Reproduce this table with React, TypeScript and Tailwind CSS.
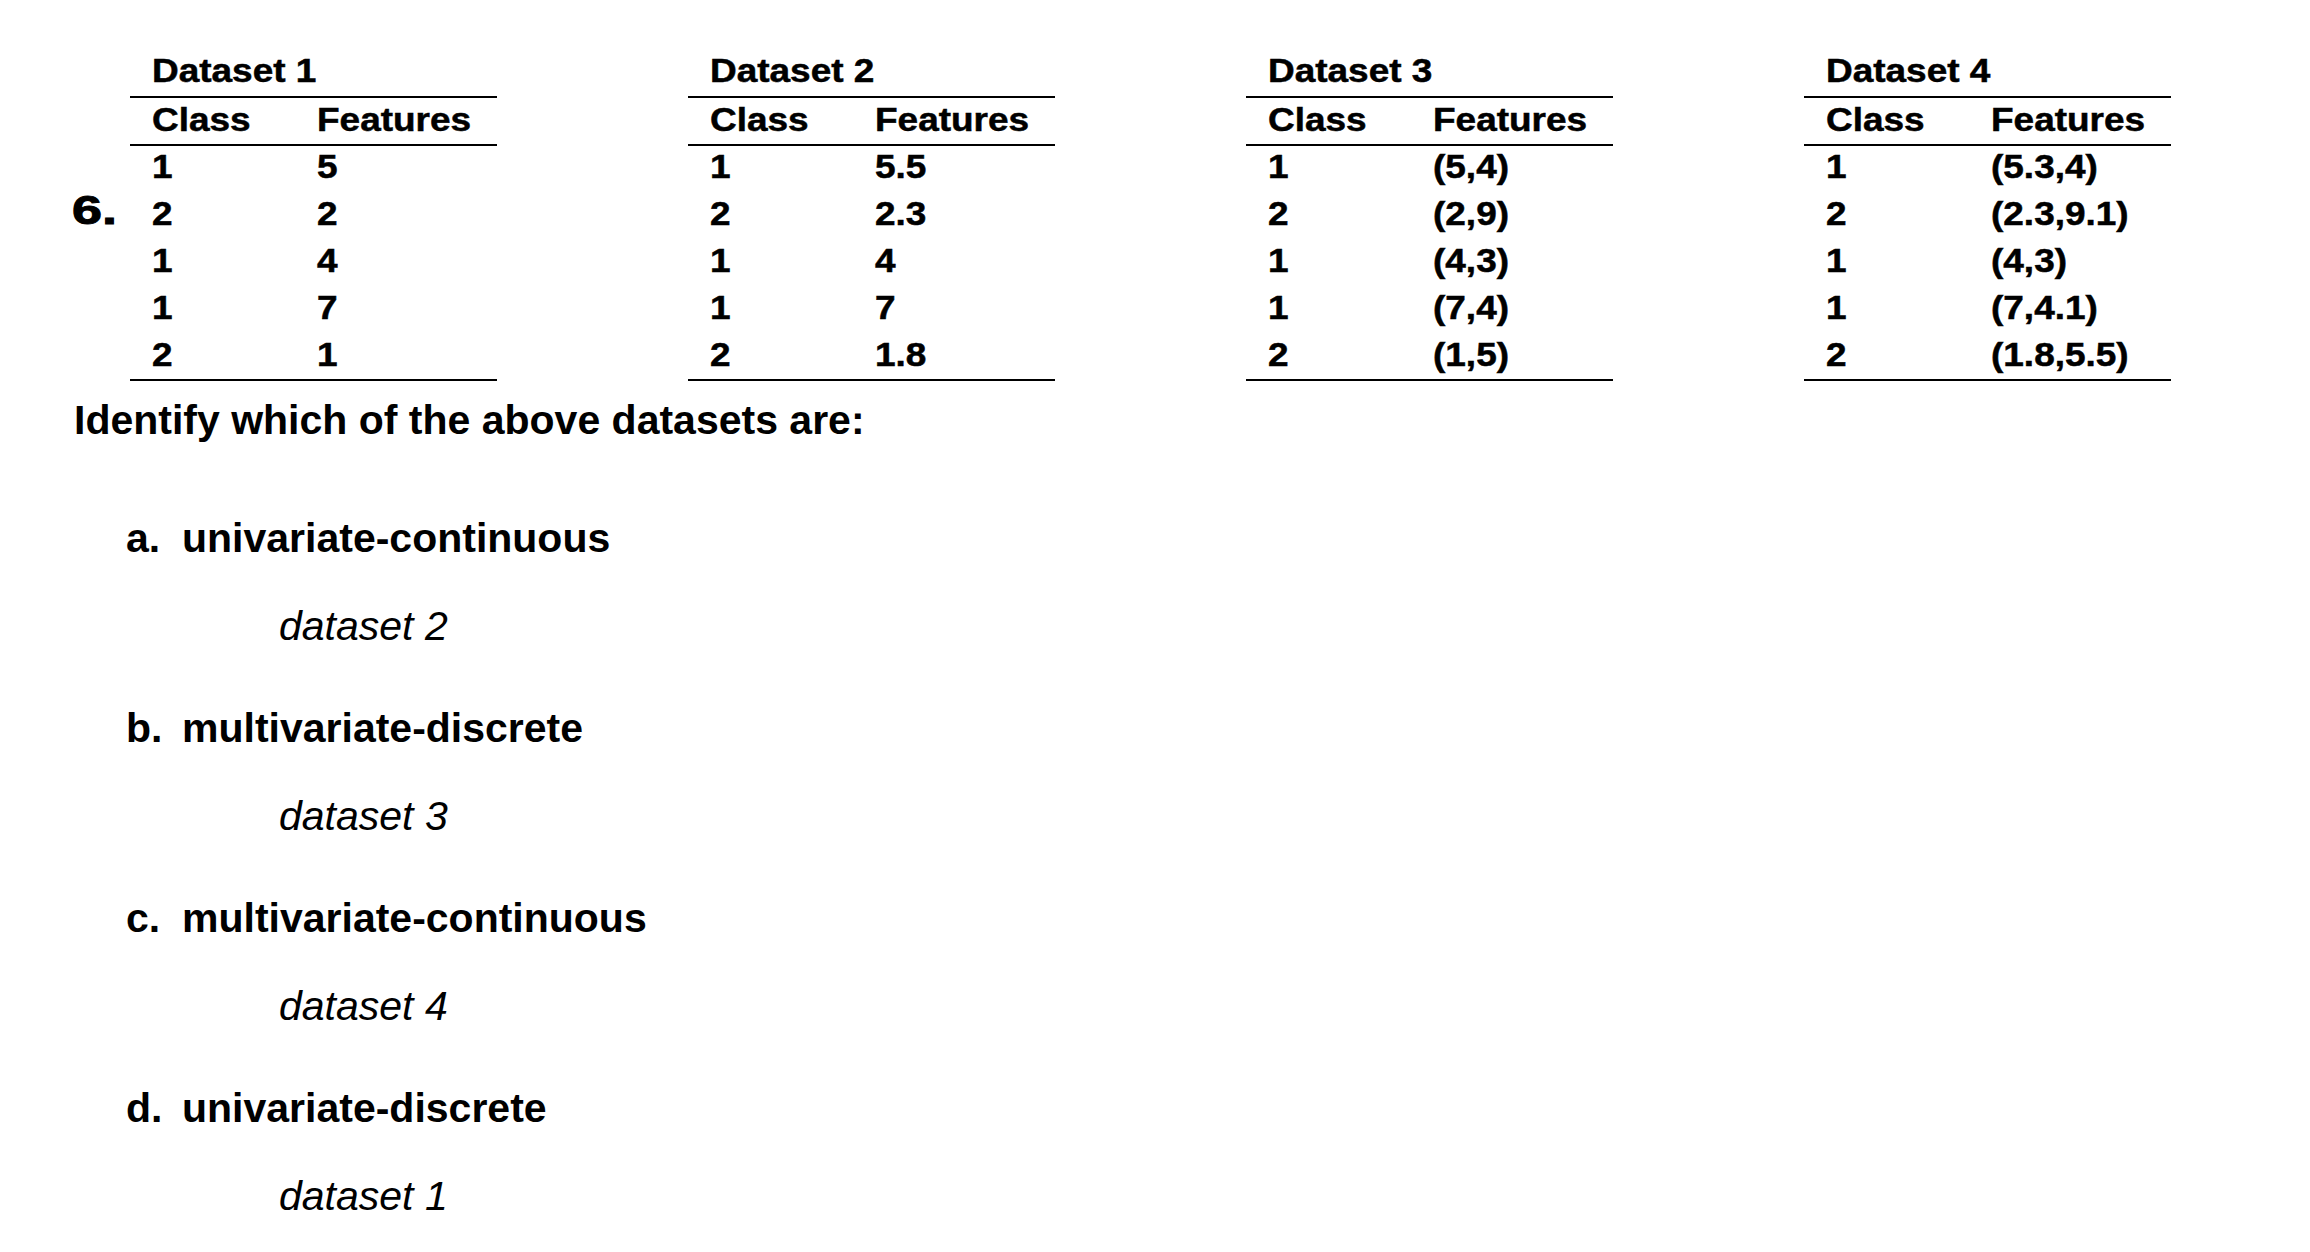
import React from "react";

type Table = { title: string; rows: [string, string][] };

const tables: Table[] = [
  { title: "Dataset 1", rows: [["1", "5"], ["2", "2"], ["1", "4"], ["1", "7"], ["2", "1"]] },
  { title: "Dataset 2", rows: [["1", "5.5"], ["2", "2.3"], ["1", "4"], ["1", "7"], ["2", "1.8"]] },
  { title: "Dataset 3", rows: [["1", "(5,4)"], ["2", "(2,9)"], ["1", "(4,3)"], ["1", "(7,4)"], ["2", "(1,5)"]] },
  { title: "Dataset 4", rows: [["1", "(5.3,4)"], ["2", "(2.3,9.1)"], ["1", "(4,3)"], ["1", "(7,4.1)"], ["2", "(1.8,5.5)"]] },
];

const items: { label: string; text: string; answer: string }[] = [
  { label: "a.", text: "univariate-continuous", answer: "dataset 2" },
  { label: "b.", text: "multivariate-discrete", answer: "dataset 3" },
  { label: "c.", text: "multivariate-continuous", answer: "dataset 4" },
  { label: "d.", text: "univariate-discrete", answer: "dataset 1" },
];

function T({ children }: { children: React.ReactNode }) {
  return (
    <span className="inline-block origin-left scale-x-[1.12] whitespace-nowrap [-webkit-text-stroke:0.5px_black]">
      {children}
    </span>
  );
}

function DataTable({ t }: { t: Table }) {
  return (
    <div className="w-[367px] text-[33px] font-bold leading-[41px]">
      <div className="pl-[22px]">
        <T>{t.title}</T>
      </div>
      <div className="mt-[5px] h-[2px] bg-black" />
      <div className="mt-[1px] grid grid-cols-[165px_1fr] pl-[22px]">
        <T>Class</T>
        <T>Features</T>
      </div>
      <div className="mt-[4px] h-[2px] bg-black" />
      <div className="flex flex-col gap-[6px]">
        {t.rows.map((r, i) => (
          <div key={i} className="grid grid-cols-[165px_1fr] pl-[22px]">
            <T>{r[0]}</T>
            <T>{r[1]}</T>
          </div>
        ))}
      </div>
      <div className="mt-[4px] h-[2px] bg-black" />
    </div>
  );
}

export default function App() {
  return (
    <div className="min-h-[1252px] w-[2310px] bg-white pt-[50px] text-black font-['Liberation_Sans',Arial,Helvetica,sans-serif]">
      <div className="flex">
        <div className="w-[130px] shrink-0 pl-[72px] pt-[140px]">
          <span className="inline-block origin-left scale-x-[1.35] text-[40px] font-bold leading-[40px] [-webkit-text-stroke:1px_black]">
            6.
          </span>
        </div>
        <div className="flex gap-[191px]">
          {tables.map((t) => (
            <DataTable key={t.title} t={t} />
          ))}
        </div>
      </div>

      <div className="mt-[15px] pl-[74px] text-[41px] font-bold leading-[48px]">
        Identify which of the above datasets are:
      </div>

      <div className="mt-[70px] flex flex-col gap-[54px] pl-[126px]">
        {items.map((it) => (
          <div key={it.label} className="flex flex-col">
            <div className="flex text-[41px] font-bold leading-[48px]">
              <span className="w-[56px] shrink-0">{it.label}</span>
              <span>{it.text}</span>
            </div>
            <div className="mt-[40px] pl-[153px] text-[41px] italic font-normal leading-[48px]">
              {it.answer}
            </div>
          </div>
        ))}
      </div>
    </div>
  );
}
